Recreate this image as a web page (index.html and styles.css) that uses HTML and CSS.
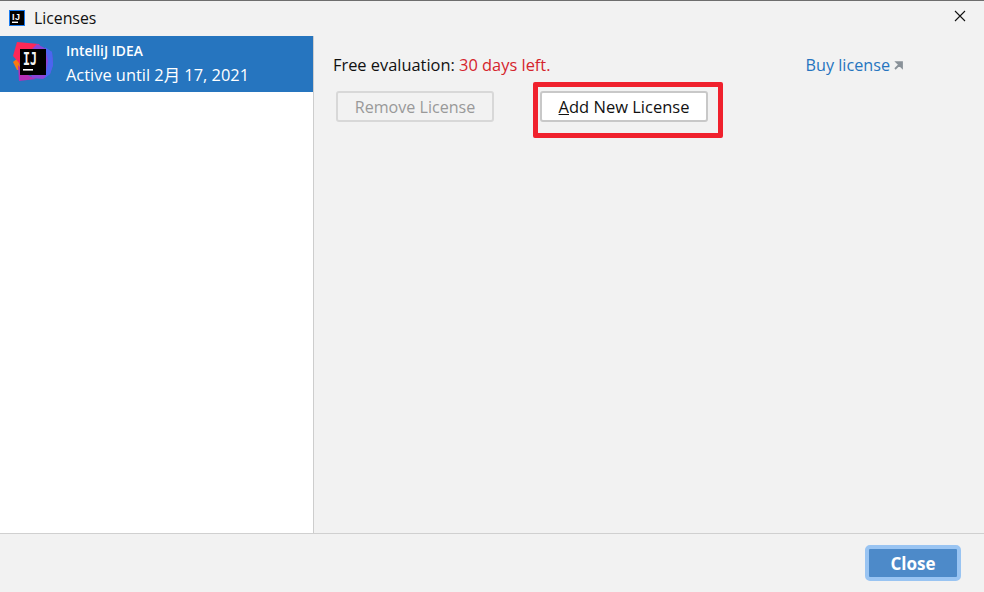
FILE: index.html
```html
<!DOCTYPE html>
<html lang="en">
<head>
<meta charset="utf-8">
<title>Licenses</title>
<link rel="stylesheet" href="styles.css">
</head>
<body>
<div class="dialog">
  <header class="titlebar">
    <svg class="app-icon" width="16" height="16" viewBox="0 0 16 16">
      <rect x="0.5" y="0.5" width="15" height="15" fill="#000" stroke="#1b7cf0"/>
      <text x="3" y="10" class="app-icon-text">IJ</text>
      <rect x="3" y="11.6" width="6" height="1.4" fill="#fff"/>
    </svg>
    <span class="title">Licenses</span>
    <svg class="close-x" width="12" height="12" viewBox="0 0 12 12">
      <path d="M1 1L11 11M11 1L1 11" stroke="#111" stroke-width="1.1" fill="none"/>
    </svg>
  </header>
  <main class="body">
    <aside class="sidebar">
      <div class="product">
        <svg class="product-icon" width="42" height="42" viewBox="0 0 42 42">
          <polygon points="1,21 6,17 9,29 5,29" fill="#f97a12"/>
          <polygon points="5,1 27,3 32,14 14,30 1,15" fill="#fe2857"/>
          <polygon points="6,24 16,34 24,38 7,40" fill="#b52fb5"/>
          <polygon points="25,3 40,11 41,24 38,33 31,38 20,37 14,14" fill="#8a45d8"/>
          <polygon points="33,6 40,11 41,24 38,33 33,37 36,20" fill="#4a66f0"/>
          <rect x="8" y="8" width="26" height="26" fill="#000"/>
          <text x="11" y="24" textLength="14" lengthAdjust="spacingAndGlyphs" class="product-icon-text">IJ</text>
          <rect x="11" y="28" width="10" height="1.6" fill="#fff"/>
        </svg>
        <div class="product-text">
          <div class="product-name">IntelliJ IDEA</div>
          <div class="product-date">Active until 2月 17, 2021</div>
        </div>
      </div>
    </aside>
    <section class="content">
      <div class="status-row">
        <p class="status">Free evaluation: <span class="days">30 days left.</span></p>
        <a class="buy">Buy license<svg class="arrow" width="9" height="9" viewBox="0 0 9 9"><path d="M1 8L6.5 2.5M2.5 1.2H8V6.7Z" stroke="#8a9299" stroke-width="1.8" fill="#8a9299"/></svg></a>
      </div>
      <div class="actions">
        <button class="btn btn-disabled">Remove License</button>
        <div class="highlight">
          <button class="btn btn-default"><u>A</u>dd New License</button>
        </div>
      </div>
    </section>
  </main>
  <footer class="footer">
    <button class="close-btn">Close</button>
  </footer>
</div>
</body>
</html>
```

FILE: styles.css
```css
* { box-sizing: border-box; }
html, body { margin: 0; height: 100%; }
body {
  font-family: "Open Sans", "Noto Sans", "Noto Sans CJK SC", sans-serif;
  font-size: 16px;
  color: #111;
  background: #f2f2f2;
  overflow: hidden;
}
.dialog { display: flex; flex-direction: column; height: 592px; border-top: 1px solid #6e6e6e; }
.titlebar { height: 35px; display: flex; align-items: center; padding: 0 18px 0 9px; flex: none; }
.app-icon { flex: none; margin-right: 9px; margin-top: -1px; }
.app-icon-text { font: bold 9px "Liberation Sans", sans-serif; letter-spacing: 0.5px; fill: #fff; }
.title { flex: 1; font-size: 15.8px; margin-top: -1px; }
.close-x { flex: none; margin-top: -6px; }
.body { flex: 1; display: flex; min-height: 0; }
.sidebar { width: 314px; flex: none; background: #fff; border-right: 1px solid #cdcdcd; }
.product { height: 56px; background: #2675bf; color: #fff; display: flex; align-items: center; padding-left: 12px; }
.product-icon { flex: none; margin-right: 12px; margin-top: -4px; }
.product-icon-text { font: bold 17px "DejaVu Sans Mono", monospace; fill: #f4f4f4; }
.product-text { display: flex; flex-direction: column; }
.product-name { font-size: 13.8px; font-weight: 600; line-height: 17px; margin-bottom: 5px; }
.product-date { font-size: 16.4px; line-height: 22px; }
.content { flex: 1; padding: 16px 81px 0 19px; }
.status-row { display: flex; justify-content: space-between; align-items: center; height: 24px; }
.status { margin: 0; font-size: 16.4px; }
.days { color: #d5242c; }
.buy { color: #2675bf; font-size: 16.2px; display: flex; align-items: center; gap: 4px; margin-top: 1px; }
.arrow { margin-top: 2px; }
.actions { display: flex; align-items: flex-start; gap: 39px; margin-top: 6px; padding-left: 3px; }
.btn { font: inherit; font-size: 16.5px; height: 31px; padding: 0; border-radius: 3px; background: #f2f2f2; }
.btn-disabled { width: 158px; margin-top: 9px; border: 2px solid #d8d8d8; color: #999; font-size: 16.1px; }
.highlight { width: 190px; height: 56px; border: 5px solid #f0212d; border-radius: 2px; padding: 4px 0 0 2px; }
.btn-default { width: 168px; background: #fff; border: 2px solid #c8c8c8; color: #111; }
.footer { height: 59px; flex: none; border-top: 1px solid #d0d0d0; display: flex; justify-content: flex-end; align-items: center; padding-right: 23px; }
.close-btn { width: 96px; height: 36px; font: inherit; font-weight: 700; font-size: 17px; color: #fff; background: #4d8ac9; border: 4px solid #99c4f2; border-radius: 5px; padding: 0; }
```
